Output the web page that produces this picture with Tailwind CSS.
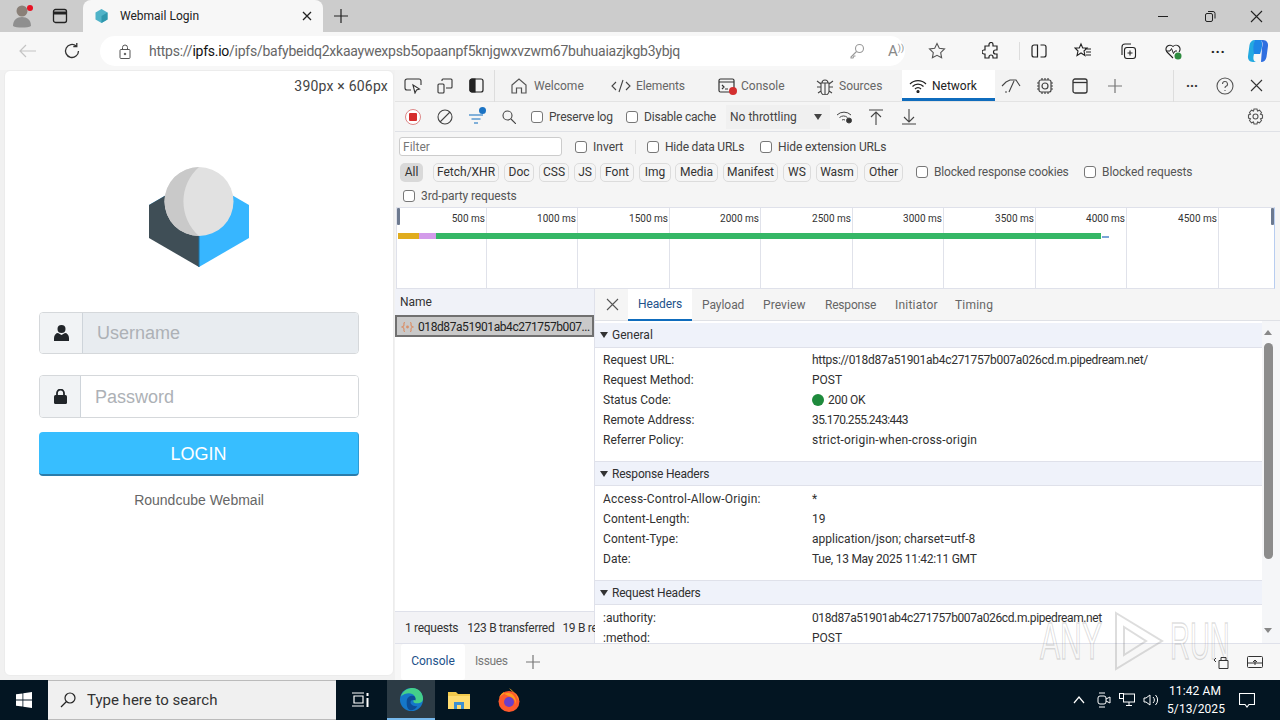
<!DOCTYPE html>
<html lang="en">
<head>
  <meta charset="UTF-8" />
  <title>Webmail Login</title>
  <script src="https://cdn.jsdelivr.net/npm/@tailwindcss/browser@4"></script>
</head>
<body class="bg-[#cccccc] overflow-hidden">
<div class="relative w-[1280px] h-[720px] flex flex-col overflow-hidden font-['Roboto',sans-serif] text-[12px] text-[#444]">

  <!-- tab strip -->
  <div class="h-[32px] bg-[#cccccc] flex items-center shrink-0">
    <div class="relative w-[44px] h-[32px] flex items-center justify-center">
      <svg width="22" height="24" viewBox="0 0 22 24"><circle cx="11" cy="7" r="5.5" fill="#8a8078"/><path d="M2 22c0-6 4-9 9-9s9 3 9 9c-3 2-15 2-18 0z" fill="#8f8f8f"/></svg>
      <span class="absolute left-[27px] top-[5px] w-[6px] h-[6px] rounded-full bg-[#e81123]"></span>
    </div>
    <div class="w-[32px] flex justify-center">
      <svg width="16" height="16" viewBox="0 0 16 16" fill="none" stroke="#222" stroke-width="1.3"><rect x="1.5" y="1.5" width="13" height="13" rx="2"/><path d="M1.5 5h13" stroke-width="3"/></svg>
    </div>
    <div class="ml-[7px] w-[240px] h-[32px] bg-[#f7f7f7] rounded-t-[8px] flex items-center">
      <svg class="ml-[12px] shrink-0" width="13" height="14" viewBox="0 0 13 14"><path d="M6.5 0l6 3.5v7L6.500 14l-6-3.500v-7z" fill="#4fb3c8"/><path d="M6.500 7v7l6-3.500v-7z" fill="#2f97ad"/></svg>
      <span class="ml-[12px] w-[169px] text-[12px] text-[#222]">Webmail Login</span>
      <svg class="ml-[12px] shrink-0" width="12" height="12" viewBox="0 0 12 12" stroke="#222" stroke-width="1.3"><path d="M2 2l8 8M10 2l-8 8"/></svg>
    </div>
    <svg class="ml-[11px]" width="14" height="14" viewBox="0 0 14 14" stroke="#222" stroke-width="1.2"><path d="M7 0v14M0 7h14"/></svg>
    <div class="ml-auto flex items-center">
      <svg width="12" height="12" viewBox="0 0 12 12" stroke="#222"><path d="M1 6.500h10"/></svg>
      <svg class="ml-[35px]" width="12" height="12" viewBox="0 0 12 12" fill="none" stroke="#222"><rect x="1.500" y="3.500" width="7" height="8" rx="1.500"/><path d="M4 1.500h5a2 2 0 0 1 2 2v5"/></svg>
      <svg class="ml-[34px] mr-[17px]" width="13" height="13" viewBox="0 0 13 13" stroke="#222" stroke-width="1.100"><path d="M1 1l11 11M12 1L1 12"/></svg>
    </div>
  </div>

  <!-- address bar -->
  <div class="h-[38px] bg-[#f7f7f7] flex items-center shrink-0">
    <svg class="ml-[19px] shrink-0" width="18" height="14" viewBox="0 0 18 14" fill="none" stroke="#c4c4c4" stroke-width="1.200"><path d="M17 7H1M7 1L1 7l6 6"/></svg>
    <svg class="ml-[26px] shrink-0" width="18" height="18" viewBox="0 0 18 18" fill="none" stroke="#333" stroke-width="1.300"><path d="M15.500 9a6.500 6.500 0 1 1-2.200-4.900M13.800 1v3.500h-3.500"/></svg>
    <div class="ml-[19px] w-[805px] h-[30px] shrink-0 bg-white rounded-full flex items-center">
      <svg class="ml-[19px] shrink-0" width="12" height="15" viewBox="0 0 12 15" fill="none" stroke="#555"><rect x="1" y="5.500" width="10" height="9" rx="1"/><path d="M3.500 5.500V3.500a2.500 2.500 0 0 1 5 0v2"/><circle cx="6" cy="10" r=".8" fill="#555"/></svg>
      <span class="ml-[18px] w-[532px] shrink-0 whitespace-nowrap text-[14px] tracking-[-0.25px] text-[#666]">https://<span class="text-[#111]">ipfs.io</span>/ipfs/bafybeidq2xkaaywexpsb5opaanpf5knjgwxvzwm67buhuaiazjkgb3ybjq</span>
      <svg class="ml-[168px] shrink-0" width="16" height="16" viewBox="0 0 16 16" fill="none" stroke="#999" stroke-width="1.100"><circle cx="10.500" cy="5.500" r="4"/><path d="M7.500 8.500L2 14v1h2l1-2h1.500"/></svg>
      <span class="ml-[23px] w-[22px] shrink-0 text-[15px] text-[#888] leading-none">A<span class="text-[9px] align-top">))</span></span>
      <svg class="ml-[18px] shrink-0" width="18" height="18" viewBox="0 0 18 18" fill="none" stroke="#555" stroke-width="1.100"><path d="M9 1.500l2.300 4.800 5.200.7-3.800 3.600.9 5.200L9 13.300l-4.600 2.500.9-5.200L1.500 7l5.200-.7z"/></svg>
    </div>
    <svg class="ml-[77px] shrink-0" width="18" height="18" viewBox="0 0 18 18" fill="none" stroke="#222" stroke-width="1.200"><path d="M7 2.500a2 2 0 0 1 4 0V4h4v4h-1.500a2 2 0 0 0 0 4H15v4h-4v-1a2 2 0 0 0-4 0v1H3v-4H2a2 2 0 0 1 0-4h1V4h4z"/></svg>
    <span class="ml-[19px] w-px h-[18px] bg-[#ddd] shrink-0"></span>
    <svg class="ml-[11px] shrink-0" width="16" height="16" viewBox="0 0 16 16" fill="none" stroke="#222" stroke-width="1.200"><path d="M6.500 2H3a2 2 0 0 0-2 2v8a2 2 0 0 0 2 2h3.500zM9.500 2H13a2 2 0 0 1 2 2v8a2 2 0 0 1-2 2H9.500"/></svg>
    <svg class="ml-[27px] shrink-0" width="18" height="18" viewBox="0 0 18 18" fill="none" stroke="#222" stroke-width="1.100"><path d="M7 2l1.700 4H13l-3 3 1 4.500-4-2.500-4 2.500L4 9 1 6h4.300zM11 7h6M12 10h5M12 13h5"/></svg>
    <svg class="ml-[27px] shrink-0" width="18" height="18" viewBox="0 0 18 18" fill="none" stroke="#222" stroke-width="1.100"><rect x="5.500" y="5.500" width="11" height="11" rx="2.500"/><path d="M11 8.500v5M8.500 11h5M3 13V5a3 3 0 0 1 3-3h6"/></svg>
    <svg class="ml-[27px] shrink-0" width="19" height="19" viewBox="0 0 19 19" fill="none"><path d="M9 16L3 10a4 4 0 0 1 6-5.500A4 4 0 0 1 15 10" stroke="#222" stroke-width="1.100"/><path d="M2 9h4l1.500-2.500 2 5L11 9h2" stroke="#222"/><circle cx="14" cy="14" r="3.500" fill="#2e8b3f"/></svg>
    <span class="ml-[26px] w-[18px] shrink-0 text-center text-[15px] font-bold text-[#222] leading-none tracking-[0.5px] -mt-[6px]">...</span>
    <svg class="ml-[20px] shrink-0" width="22" height="24" viewBox="0 0 22 24"><path d="M8 1c-3 0-5 2-5.500 5L1 17c-.5 3 1.500 6 5 6h3c-3-1-3-4-2-8z" fill="#24a9e0"/><path d="M14 23c3 0 5-2 5.500-5L21 7c.5-3-1.500-6-5-6h-3c3 1 3 4 2 8z" fill="#2f6fe0"/><path d="M8 1h6c2 3 1 9-1 14H7C6 10 6 5 8 1z" fill="#1e86e6"/></svg>
  </div>

  <div class="flex h-[610px] shrink-0 bg-[#f3f3f3]">
    <!-- page viewport -->
    <div class="w-[395px] shrink-0 pl-[4px] pr-px pb-[4px] bg-[#f1f1f1]">
      <div class="relative h-full bg-white rounded-[6px] border border-[#ececec] flex flex-col items-center pt-[96px] font-['Liberation_Sans',sans-serif]">
        <span class="absolute right-[5px] top-[5px] bg-white text-[14px] tracking-[0.2px] text-[#444] font-['Roboto',sans-serif]">390px × 606px</span>
        <svg width="100" height="100" viewBox="0 0 100 100">
          <path d="M0 38L50 9l50 29v33L50 100z" fill="#37b6ff" />
          <path d="M0 38L50 9v91L0 71z" fill="#3f4e56"/>
          <path d="M50 68v32" stroke="#1e6f9e"/>
          <circle cx="50" cy="34.500" r="34.500" fill="#e1e1e1"/>
          <path d="M50 0A34.500 34.500 0 0 0 50 69A46 46 0 0 1 50 0z" fill="#c9c9c9"/>
        </svg>
        <div class="mt-[45px] w-[320px] h-[42px] flex rounded-[4px] border border-[#d5d8db] overflow-hidden">
          <div class="w-[43px] bg-[#f1f3f5] border-r border-[#ced4da] flex items-center justify-center">
            <svg width="15" height="16" viewBox="0 0 15 16" fill="#212529"><circle cx="7.500" cy="4" r="4"/><path d="M0 16v-3c0-3 2-5 4-5l3.500 2L11 8c2 0 4 2 4 5v3z"/></svg>
          </div>
          <div class="flex-1 bg-[#e8ecf0] pl-[14px] flex items-center text-[18px] text-[#adb1b6]">Username</div>
        </div>
        <div class="mt-[21px] w-[320px] h-[43px] flex rounded-[4px] border border-[#d5d8db] overflow-hidden">
          <div class="w-[41px] bg-[#f1f3f5] border-r border-[#ced4da] flex items-center justify-center">
            <svg width="13" height="15" viewBox="0 0 13 15"><rect y="6" width="13" height="9" rx="1.500" fill="#212529"/><path d="M3 7V4a3.500 3.500 0 0 1 7 0v3" fill="none" stroke="#212529" stroke-width="1.800"/></svg>
          </div>
          <div class="flex-1 bg-white pl-[14px] pt-[1px] flex items-center text-[18px] text-[#adb1b6]">Password</div>
        </div>
        <div class="mt-[14px] w-[320px] h-[44px] pt-[2px] bg-[#37beff] rounded-[4px] border-b-2 border-b-[#2a7cab] border-r border-r-[#2f9bd4] flex items-center justify-center text-white text-[18px]">LOGIN</div>
        <div class="mt-[14px] text-[14px] text-[#666]">Roundcube Webmail</div>
      </div>
    </div>

    <!-- devtools -->
    <div class="flex-1 flex flex-col bg-[#f5f5f5] min-w-0">
      <!-- tabs -->
      <div class="h-[32px] flex items-center border-b border-[#e3e3e3] shrink-0 bg-[#f3f3f3]">
        <div class="w-[27px] flex justify-end"><svg width="18" height="16" viewBox="0 0 18 16" fill="none" stroke="#333" stroke-width="1.100"><path d="M7 12H3a2 2 0 0 1-2-2V3a2 2 0 0 1 2-2h12a2 2 0 0 1 2 2v4"/><path d="M9 7l2 8 1.500-3 3-1z" fill="#fff"/></svg></div>
        <svg class="ml-[15px]" width="16" height="16" viewBox="0 0 16 16" fill="none" stroke="#333" stroke-width="1.100"><rect x="1" y="6" width="6" height="9" rx="1"/><path d="M5 3V2a1 1 0 0 1 1-1h8a1 1 0 0 1 1 1v7a1 1 0 0 1-1 1H9"/></svg>
        <svg class="ml-[16px]" width="15" height="15" viewBox="0 0 15 15" fill="none" stroke="#222" stroke-width="1.200"><rect x="1" y="1" width="13" height="13" rx="2"/><path d="M1 3a2 2 0 0 1 2-2h3v13H3a2 2 0 0 1-2-2z" fill="#222"/></svg>
        <span class="ml-[10px] w-px h-[32px] bg-[#ddd]"></span>
        <svg class="ml-[15px]" width="18" height="18" viewBox="0 0 18 18" fill="none" stroke="#555" stroke-width="1.200"><path d="M2 8l7-6 7 6v8h-4.500v-5h-5v5H2z"/></svg>
        <span class="ml-[6px] w-[50px] text-[#666] whitespace-nowrap">Welcome</span>
        <svg class="ml-[27px]" width="20" height="14" viewBox="0 0 20 14" fill="none" stroke="#444" stroke-width="1.100"><path d="M5 3L1 7l4 4M15 3l4 4-4 4M12 1L8 13"/></svg>
        <span class="ml-[5px] w-[49px] text-[#666] whitespace-nowrap tracking-[-0.1px]">Elements</span>
        <div class="relative ml-[33px]">
          <svg class="block" width="18" height="16" viewBox="0 0 18 16" fill="none" stroke="#333" stroke-width="1.200"><rect x="1" y="1" width="15" height="13" rx="1.500"/><path d="M1 4h15M4 7l2 2-2 2M7 11h3"/></svg>
          <span class="absolute left-[11px] top-[9px] w-[8px] h-[8px] rounded-full bg-[#d32f2f]"></span>
        </div>
        <span class="ml-[5px] w-[44px] text-[#666] whitespace-nowrap">Console</span>
        <svg class="ml-[31px]" width="18" height="18" viewBox="0 0 18 18" fill="none" stroke="#444" stroke-width="1.100"><path d="M5 6h8v8a4 4 0 0 1-8 0zM6 6a3 3 0 0 1 6 0M1 4l4 3M17 4l-4 3M1 10h4M17 10h-4M2 16l3-2M16 16l-3-2M9 6v12"/></svg>
        <span class="ml-[5px] w-[41px] text-[#666] whitespace-nowrap">Sources</span>
        <div class="ml-[22px] w-[93px] h-[31px] pt-[3px] bg-white border-b-[3px] border-[#0f6cbd] flex items-center pl-[7px]">
          <svg width="18" height="14" viewBox="0 0 18 14" fill="none" stroke="#222" stroke-width="1.200"><path d="M1 5a11 11 0 0 1 16 0M3.500 7.500a7.500 7.500 0 0 1 11 0M6 10a4 4 0 0 1 6 0"/><circle cx="9" cy="12.500" r="1" fill="#222"/></svg>
          <span class="ml-[5px] text-[#222]">Network</span>
        </div>
        <svg class="ml-[6px]" width="20" height="14" viewBox="0 0 20 14" fill="none" stroke="#444" stroke-width="1.100"><path d="M1 7l4-4 4-2 6 0 4 6M8 13l5-11M4 13h2"/></svg>
        <svg class="ml-[15px]" width="18" height="18" viewBox="0 0 18 18" fill="none" stroke="#444" stroke-width="1.200"><rect x="3" y="3" width="12" height="12" rx="2"/><circle cx="9" cy="9" r="3"/><path d="M6 1v2M9 1v2M12 1v2M6 15v2M9 15v2M12 15v2M1 6h2M1 9h2M1 12h2M15 6h2M15 9h2M15 12h2"/></svg>
        <svg class="ml-[18px]" width="16" height="16" viewBox="0 0 16 16" fill="none" stroke="#333" stroke-width="1.300"><rect x="1" y="1" width="14" height="14" rx="2"/><path d="M1 4.500h14"/></svg>
        <svg class="ml-[20px]" width="14" height="14" viewBox="0 0 14 14" stroke="#777" stroke-width="1.200"><path d="M7 0v14M0 7h14"/></svg>
        <span class="ml-[51px] w-px h-[32px] bg-[#ddd]"></span>
        <span class="ml-[12px] w-[14px] text-[14px] font-bold leading-none -mt-[7px] text-[#333]">...</span>
        <svg class="ml-[16px]" width="18" height="18" viewBox="0 0 18 18" fill="none" stroke="#555" stroke-width="1.100"><circle cx="9" cy="9" r="8"/><path d="M6.500 7a2.500 2.500 0 1 1 3.500 2.300c-.7.300-1 .8-1 1.700M9 13v1"/></svg>
        <svg class="ml-[16px]" width="13" height="13" viewBox="0 0 13 13" stroke="#333" stroke-width="1.100"><path d="M1 1l11 11M12 1L1 12"/></svg>
      </div>

      <!-- toolbar -->
      <div class="h-[30px] flex items-center border-b border-[#dfe1e6] shrink-0 text-[#444]">
        <div class="ml-[10px] w-[16px] h-[16px] rounded-full border border-[#d88] bg-white flex items-center justify-center"><span class="w-[8px] h-[8px] rounded-[1px] bg-[#d62c2c]"></span></div>
        <svg class="ml-[16px]" width="16" height="16" viewBox="0 0 16 16" fill="none" stroke="#444" stroke-width="1.100"><circle cx="8" cy="8" r="7"/><path d="M3 13L13 3"/></svg>
        <div class="relative ml-[16px]">
          <svg class="block" width="18" height="14" viewBox="0 0 18 14" fill="none" stroke="#0f6cbd" stroke-width="1.200"><path d="M0 5h14M2.500 9h9M5 13h4"/></svg>
          <span class="absolute left-[10px] -top-[3px] w-[7px] h-[7px] rounded-full bg-[#1b73c4]"></span>
        </div>
        <svg class="ml-[15px]" width="14" height="14" viewBox="0 0 14 14" fill="none" stroke="#444" stroke-width="1.100"><circle cx="5.500" cy="5.500" r="4.500"/><path d="M9 9l5 5"/></svg>
        <span class="ml-[15px] w-[12px] h-[12px] rounded-[3px] border border-[#777] bg-white"></span>
        <span class="ml-[6px] w-[71px] whitespace-nowrap tracking-[-0.2px]">Preserve log</span>
        <span class="ml-[6px] w-[12px] h-[12px] rounded-[3px] border border-[#777] bg-white"></span>
        <span class="ml-[6px] w-[76px] whitespace-nowrap tracking-[-0.2px]">Disable cache</span>
        <div class="ml-[6px] w-[104px] h-[24px] bg-[#f0f0f0] flex items-center pl-[4px]"><span class="w-[84px] whitespace-nowrap">No throttling</span><span class="w-0 h-0 border-l-[4px] border-r-[4px] border-t-[6px] border-l-transparent border-r-transparent border-t-[#444]"></span></div>
        <svg class="ml-[6px]" width="18" height="14" viewBox="0 0 18 14" fill="none" stroke="#444"><path d="M1 5a10 10 0 0 1 14 0M3.500 7.500a6.500 6.500 0 0 1 8 0M6 10a3 3 0 0 1 3 0"/><circle cx="13" cy="10.500" r="2.500" fill="#333"/></svg>
        <svg class="ml-[15px]" width="14" height="16" viewBox="0 0 14 16" fill="none" stroke="#444" stroke-width="1.100"><path d="M0 1h14M7 16V3M2 8l5-5 5 5"/></svg>
        <svg class="ml-[19px]" width="14" height="16" viewBox="0 0 14 16" fill="none" stroke="#444" stroke-width="1.100"><path d="M0 15h14M7 0v13M2 8l5 5 5-5"/></svg>
        <svg class="ml-[331px]" width="17" height="17" viewBox="0 0 17 17" fill="none" stroke="#555" stroke-width="1.100"><circle cx="8.500" cy="8.500" r="2.500"/><path d="M7 1h3l.5 2 2-.8 2 2.300-1 1.800 2 .700v3l-2 .700 1 1.800-2 2.300-2-.8-.5 2H7l-.5-2-2 .8-2-2.300 1-1.800-2-.700v-3l2-.700-1-1.800 2-2.300 2 .8z"/></svg>
      </div>

      <!-- filter row -->
      <div class="h-[28px] pt-[1px] flex items-center shrink-0">
        <div class="ml-[4px] w-[163px] h-[19px] bg-white border border-[#ccc] rounded-[3px] pl-[3px] flex items-center text-[#777]">Filter</div>
        <span class="ml-[13px] w-[12px] h-[12px] rounded-[3px] border border-[#777] bg-white"></span>
        <span class="ml-[6px] w-[36px]">Invert</span>
        <span class="ml-[6px] w-px h-[14px] bg-[#ddd]"></span>
        <span class="ml-[11px] w-[12px] h-[12px] rounded-[3px] border border-[#777] bg-white"></span>
        <span class="ml-[6px] w-[89px] whitespace-nowrap tracking-[-0.2px]">Hide data URLs</span>
        <span class="ml-[6px] w-[12px] h-[12px] rounded-[3px] border border-[#777] bg-white"></span>
        <span class="ml-[6px] whitespace-nowrap tracking-[-0.1px]">Hide extension URLs</span>
      </div>

      <!-- type chips -->
      <div class="h-[24px] flex items-center shrink-0 text-[#333]">
        <span class="ml-[5px] w-[23px] h-[19px] rounded-[5px] bg-[#d9d9d9] flex items-center justify-center">All</span>
        <span class="ml-[10px] w-[66px] h-[19px] rounded-[5px] border border-[#dcdcdc] flex items-center justify-center">Fetch/XHR</span>
        <span class="ml-[5px] w-[30px] h-[19px] rounded-[5px] border border-[#dcdcdc] flex items-center justify-center">Doc</span>
        <span class="ml-[5px] w-[30px] h-[19px] rounded-[5px] border border-[#dcdcdc] flex items-center justify-center">CSS</span>
        <span class="ml-[5px] w-[22px] h-[19px] rounded-[5px] border border-[#dcdcdc] flex items-center justify-center">JS</span>
        <span class="ml-[4px] w-[34px] h-[19px] rounded-[5px] border border-[#dcdcdc] flex items-center justify-center">Font</span>
        <span class="ml-[5px] w-[32px] h-[19px] rounded-[5px] border border-[#dcdcdc] flex items-center justify-center">Img</span>
        <span class="ml-[4px] w-[43px] h-[19px] rounded-[5px] border border-[#dcdcdc] flex items-center justify-center">Media</span>
        <span class="ml-[5px] w-[55px] h-[19px] rounded-[5px] border border-[#dcdcdc] flex items-center justify-center">Manifest</span>
        <span class="ml-[5px] w-[28px] h-[19px] rounded-[5px] border border-[#dcdcdc] flex items-center justify-center">WS</span>
        <span class="ml-[5px] w-[42px] h-[19px] rounded-[5px] border border-[#dcdcdc] flex items-center justify-center">Wasm</span>
        <span class="ml-[6px] w-[39px] h-[19px] rounded-[5px] border border-[#dcdcdc] flex items-center justify-center">Other</span>
        <span class="ml-[13px] w-[12px] h-[12px] rounded-[3px] border border-[#777] bg-white"></span>
        <span class="ml-[6px] w-[136px] text-[#555] tracking-[-0.2px] whitespace-nowrap">Blocked response cookies</span>
        <span class="ml-[14px] w-[12px] h-[12px] rounded-[3px] border border-[#777] bg-white"></span>
        <span class="ml-[6px] text-[#555] tracking-[-0.1px] whitespace-nowrap">Blocked requests</span>
      </div>

      <!-- third party -->
      <div class="h-[23px] flex items-center shrink-0 text-[#555] tracking-[-0.1px]">
        <span class="ml-[8px] w-[12px] h-[12px] rounded-[3px] border border-[#777] bg-white"></span>
        <span class="ml-[6px]">3rd-party requests</span>
      </div>

      <!-- overview -->
      <div class="relative ml-px h-[82px] w-[879px] shrink-0 bg-white border-y border-r border-l border-[#dfe1ea] border-r-[#b8cdf0] flex">
        <div class="w-[90px] h-full border-r border-[#e0e2ea] text-right pr-px pt-[3px] text-[10px] text-[#333]">500 ms</div>
        <div class="w-[91px] h-full border-r border-[#e0e2ea] text-right pr-px pt-[3px] text-[10px] text-[#333]">1000 ms</div>
        <div class="w-[92px] h-full border-r border-[#e0e2ea] text-right pr-px pt-[3px] text-[10px] text-[#333]">1500 ms</div>
        <div class="w-[91px] h-full border-r border-[#e0e2ea] text-right pr-px pt-[3px] text-[10px] text-[#333]">2000 ms</div>
        <div class="w-[92px] h-full border-r border-[#e0e2ea] text-right pr-px pt-[3px] text-[10px] text-[#333]">2500 ms</div>
        <div class="w-[91px] h-full border-r border-[#e0e2ea] text-right pr-px pt-[3px] text-[10px] text-[#333]">3000 ms</div>
        <div class="w-[92px] h-full border-r border-[#e0e2ea] text-right pr-px pt-[3px] text-[10px] text-[#333]">3500 ms</div>
        <div class="w-[91px] h-full border-r border-[#e0e2ea] text-right pr-px pt-[3px] text-[10px] text-[#333]">4000 ms</div>
        <div class="w-[92px] h-full border-r border-[#e0e2ea] text-right pr-px pt-[3px] text-[10px] text-[#333]">4500 ms</div>
        <!-- waterfall bars -->
        <span class="absolute left-px top-[25px] w-[21px] h-[6px] bg-[#e0ac1e]"></span>
        <span class="absolute left-[22px] top-[25px] w-[17px] h-[6px] bg-[#d39bea]"></span>
        <span class="absolute left-[39px] top-[25px] w-[665px] h-[6px] bg-[#35b766]"></span>
        <span class="absolute left-[705px] top-[28px] w-[7px] h-[2px] bg-[#7aa5d8]"></span>
        <span class="absolute left-0 top-0 w-[3px] h-[17px] bg-[#6d7a90] rounded-[1px]"></span>
        <span class="absolute left-[874px] top-0 w-[3px] h-[17px] bg-[#6d7a90] rounded-[1px]"></span>
      </div>

      <!-- split -->
      <div class="flex h-[354px] shrink-0 min-h-0">
        <!-- name column -->
        <div class="w-[200px] shrink-0 flex flex-col bg-white border-r border-[#dfe1ea]">
          <div class="h-[26px] bg-[#f0f2f8] pl-[5px] flex items-center text-[#333] shrink-0">Name</div>
          <div class="h-[22px] pt-px bg-[#c9c9c9] border-2 border-[#707070] flex items-center shrink-0 text-[#222] overflow-hidden">
            <svg class="ml-[4px] shrink-0" width="13" height="12" viewBox="0 0 13 12" fill="none" stroke="#d9906a" stroke-width="1.200"><path d="M4 1.500C2.500 1.500 3 3 3 4S2.500 5.500 1 6c1.500.5 2 1 2 2s-.5 2.500 1 2.500M9 1.500c1.500 0 1 1.500 1 2.500s.5 1.500 2 2c-1.500.5-2 1-2 2s.5 2.500-1 2.500"/><circle cx="6.500" cy="6" r=".8" fill="#d9906a"/></svg>
            <span class="ml-[4px] whitespace-nowrap tracking-[-0.42px]">018d87a51901ab4c271757b007...</span>
          </div>
          <div class="flex-1"></div>
          <div class="h-[32px] bg-[#f3f3f6] border-t border-[#dfe1ea] pl-[10px] flex items-center whitespace-nowrap text-[#333] tracking-[-0.3px] shrink-0">1 requests<span class="ml-[9px]">123 B transferred</span><span class="ml-[8px]">19 B re</span></div>
        </div>
        <!-- detail pane -->
        <div class="flex-1 min-w-0 flex flex-col bg-white">
          <div class="h-[32px] bg-[#f5f5f5] flex items-center border-b border-[#dfe1e6] shrink-0 text-[#666]">
            <svg class="ml-[11px]" width="13" height="13" viewBox="0 0 13 13" stroke="#555" stroke-width="1.100"><path d="M1 1l11 11M12 1L1 12"/></svg>
            <div class="ml-[9px] w-[64px] h-[32px] bg-white border-b-2 border-[#0f6cbd] flex items-center justify-center text-[#22518a] tracking-[-0.1px]">Headers</div>
            <span class="ml-[10px] w-[52px] tracking-[-0.05px]">Payload</span>
            <span class="ml-[9px] w-[52px] tracking-[0.1px]">Preview</span>
            <span class="ml-[10px] w-[60px] tracking-[-0.2px]">Response</span>
            <span class="ml-[10px] w-[51px] tracking-[0.2px]">Initiator</span>
            <span class="ml-[9px] tracking-[0.2px]">Timing</span>
          </div>
          <div class="flex flex-1 min-h-0">
            <div class="flex-1 min-w-0 overflow-hidden text-[#303030]">
              <div class="h-[2px] bg-white"></div>
              <div class="h-[25px] bg-[#eff2fa] border-b border-[#dfe1ea] flex items-center pl-[5px]"><span class="w-0 h-0 border-l-[4px] border-r-[4px] border-t-[6px] border-l-transparent border-r-transparent border-t-[#333]"></span><span class="ml-[4px]">General</span></div>
              <div class="pt-[2px] pb-[11px]">
                <div class="h-[20px] flex items-center"><span class="pl-[8px] w-[217px]">Request URL:</span><span class="whitespace-nowrap tracking-[-0.28px]">https://018d87a51901ab4c271757b007a026cd.m.pipedream.net/</span></div>
                <div class="h-[20px] flex items-center"><span class="pl-[8px] w-[217px]">Request Method:</span><span>POST</span></div>
                <div class="h-[20px] flex items-center"><span class="pl-[8px] w-[217px]">Status Code:</span><span class="w-[12px] h-[12px] rounded-full bg-[#1e8a3c] mr-[4px]"></span><span class="tracking-[-0.3px]">200 OK</span></div>
                <div class="h-[20px] flex items-center"><span class="pl-[8px] w-[217px]">Remote Address:</span><span class="tracking-[-0.6px]">35.170.255.243:443</span></div>
                <div class="h-[20px] flex items-center"><span class="pl-[8px] w-[217px]">Referrer Policy:</span><span class="tracking-[0.2px]">strict-origin-when-cross-origin</span></div>
              </div>
              <div class="h-[25px] bg-[#eff2fa] border-y border-[#dfe1ea] flex items-center pl-[5px]"><span class="w-0 h-0 border-l-[4px] border-r-[4px] border-t-[6px] border-l-transparent border-r-transparent border-t-[#333]"></span><span class="ml-[4px] tracking-[-0.2px]">Response Headers</span></div>
              <div class="pt-[3px] pb-[11px]">
                <div class="h-[20px] flex items-center"><span class="pl-[8px] w-[217px] tracking-[0.2px] whitespace-nowrap">Access-Control-Allow-Origin:</span><span>*</span></div>
                <div class="h-[20px] flex items-center"><span class="pl-[8px] w-[217px] tracking-[0.1px]">Content-Length:</span><span>19</span></div>
                <div class="h-[20px] flex items-center"><span class="pl-[8px] w-[217px] tracking-[0.1px]">Content-Type:</span><span>application/json; charset=utf-8</span></div>
                <div class="h-[20px] flex items-center"><span class="pl-[8px] w-[217px]">Date:</span><span class="tracking-[-0.25px]">Tue, 13 May 2025 11:42:11 GMT</span></div>
              </div>
              <div class="h-[25px] bg-[#eff2fa] border-y border-[#dfe1ea] flex items-center pl-[5px]"><span class="w-0 h-0 border-l-[4px] border-r-[4px] border-t-[6px] border-l-transparent border-r-transparent border-t-[#333]"></span><span class="ml-[4px] tracking-[-0.2px]">Request Headers</span></div>
              <div class="pt-[3px]">
                <div class="h-[20px] flex items-center"><span class="pl-[8px] w-[217px]">:authority:</span><span class="whitespace-nowrap tracking-[-0.38px]">018d87a51901ab4c271757b007a026cd.m.pipedream.net</span></div>
                <div class="h-[20px] flex items-center"><span class="pl-[8px] w-[217px]">:method:</span><span>POST</span></div>
              </div>
            </div>
            <!-- scrollbar -->
            <div class="w-[18px] shrink-0 bg-[#f5f6f8] flex flex-col items-center pt-[9px] pr-[6px]">
              <span class="w-0 h-0 border-l-[4px] border-r-[4px] border-b-[5px] border-l-transparent border-r-transparent border-b-[#888]"></span>
              <span class="mt-[8px] w-[9px] h-[216px] rounded-[5px] bg-[#8c8c8c]"></span>
              <span class="mt-[69px] w-0 h-0 border-l-[4px] border-r-[4px] border-t-[5px] border-l-transparent border-r-transparent border-t-[#888]"></span>
            </div>
          </div>
        </div>
      </div>

      <!-- drawer -->
      <div class="flex-1 flex items-center bg-[#f7f7f7] border-t border-[#dfe1ea]">
        <div class="ml-[6px] w-[64px] h-[36px] pb-[2px] bg-white rounded-[3px] flex items-center justify-center text-[#22518a]">Console</div>
        <span class="ml-[10px] w-[32px] pb-[2px] text-[#777] tracking-[-0.4px]">Issues</span>
        <svg class="ml-[19px]" width="14" height="14" viewBox="0 0 14 14" stroke="#777" stroke-width="1.200"><path d="M7 0v14M0 7h14"/></svg>
        <svg class="ml-[673px]" width="16" height="14" viewBox="0 0 16 14" fill="none" stroke="#333"><path d="M6 5.500h9v8H6zM8 5.500v-3M13 5.500v-3M1 5l2-2M1 5l2 2M8 2.500h5"/></svg>
        <svg class="ml-[18px]" width="16" height="14" viewBox="0 0 16 14" fill="none" stroke="#333"><rect x=".500" y="1.500" width="15" height="11" rx="1"/><path d="M0 8h16M8 10V5M6 7l2-2 2 2"/></svg>
      </div>
    </div>
  </div>

  <!-- taskbar -->
  <div class="h-[40px] bg-[#031522] flex items-center shrink-0">
    <svg class="ml-[16px]" width="16" height="16" viewBox="0 0 16 16" fill="#fff"><path d="M0 2.300l6.500-.9v6.200H0zM7.300 1.300L16 0v7.600H7.300zM0 8.400h6.500v6.200L0 13.700zM7.300 8.400H16V16l-8.700-1.300z"/></svg>
    <div class="ml-[16px] w-[288px] h-[40px] bg-[#f0f0f0] border-y border-[#bbb] flex items-center">
      <svg class="ml-[12px]" width="16" height="16" viewBox="0 0 16 16" fill="none" stroke="#222" stroke-width="1.200"><circle cx="10" cy="6" r="5"/><path d="M6.500 9.500L1 15"/></svg>
      <span class="ml-[11px] text-[15px] text-[#333]">Type here to search</span>
    </div>
    <svg class="ml-[16px]" width="17" height="16" viewBox="0 0 17 16" fill="none" stroke="#fff" stroke-width="1.200"><path d="M0 1h12M2 4h9v7H2zM0 14h12"/><path d="M15.500 1v3M15.500 6v9" stroke-width="2"/></svg>
    <div class="ml-[18px] w-[48px] h-[40px] bg-[#2c3b45] border-b-2 border-[#76b9ed] flex items-center justify-center">
      <svg width="25" height="25" viewBox="0 0 26 26"><circle cx="13" cy="13" r="12" fill="#1577c9"/><path d="M2 10C4 3 10 1 14 1c7 0 11 6 11 11 0 4-3 5-6 5-3 0-4-1-4-2 0-3 3-2 1-6-2-3-9-4-14 1z" fill="#44cf8a"/><path d="M8 15c0-4 3-6 6-6s4 3 3 5c-3-1-5 0-5 2s3 4 7 4c-2 3-5 5-8 4-3-2-3-6-3-9z" fill="#0d4d96"/></svg>
    </div>
    <svg class="ml-[13px]" width="22" height="20" viewBox="0 0 22 20"><path d="M0 2h8l2 2h12v15H0z" fill="#f2c94c"/><path d="M0 6h22v13H0z" fill="#ffdc70"/><path d="M6 12h10v7H6z" fill="#3d8fd1"/><path d="M9 15h4v4H9z" fill="#ffdc70"/></svg>
    <svg class="ml-[27px]" width="24" height="24" viewBox="0 0 24 24"><circle cx="12" cy="13.500" r="10.500" fill="#ff5a2c"/><path d="M12 0c2 3 5 4 7 7l3 6c0-3-3-8-10-13z" fill="#ffb224"/><path d="M2 10c1-3 3-5 5-6 0 3 3 3 5 4 5 2 8 6 6 10 2-3 1-9-3-12-4-2-9-1-13 4z" fill="#ff9a1f"/><circle cx="12" cy="14" r="5" fill="#6b3fc8"/></svg>
    <div class="ml-auto flex items-center text-white">
      <svg width="12" height="8" viewBox="0 0 12 8" fill="none" stroke="#fff" stroke-width="1.200"><path d="M1 7l5-6 5 6"/></svg>
      <svg class="ml-[12px]" width="14" height="18" viewBox="0 0 14 18" fill="none" stroke="#fff"><rect x="1" y="5" width="8" height="8" rx="2"/><path d="M9 8l4-2v6l-4-2M2 2h6M2 16h6"/></svg>
      <svg class="ml-[8px]" width="16" height="14" viewBox="0 0 16 14" fill="none" stroke="#fff"><rect x="4.500" y="1" width="11" height="8"/><rect x=".5" y=".5" width="4" height="5"/><path d="M10 9v3M7 12.500h6"/></svg>
      <svg class="ml-[8px]" width="16" height="14" viewBox="0 0 16 14" fill="none" stroke="#fff"><path d="M1 5v4h2l4 3V2L3 5zM10 4a4 4 0 0 1 0 6M12.500 2a7 7 0 0 1 0 10"/></svg>
      <div class="ml-[8px] w-[56px] text-center text-[12px] leading-[18px] tracking-[0.1px] whitespace-nowrap">11:42 AM<br>5/13/2025</div>
      <svg class="ml-[16px] mr-[25px]" width="16" height="16" viewBox="0 0 16 16" fill="none" stroke="#fff" stroke-width="1.100"><path d="M.5 1.500h15v11H10l-2 2.500-2-2.500H.500z"/></svg>
    </div>
  </div>

  <!-- watermark -->
  <div class="absolute left-[1040px] top-[610px] h-[62px] flex items-center text-transparent text-[52px] leading-none font-['Liberation_Sans',sans-serif] [-webkit-text-stroke:1.500px_rgba(120,120,120,0.25)] pointer-events-none">
    <span class="scale-x-[0.58] origin-left w-[73px]">ANY</span>
    <svg width="52" height="62" viewBox="0 0 52 62" fill="none" stroke="rgba(120,120,120,0.25)" stroke-width="2"><path d="M3 3l46 28-46 28zM11 17l22 14-22 14z"/></svg>
    <span class="scale-x-[0.53] origin-left ml-[5px]">RUN</span>
  </div>
</div>
</body>
</html>
